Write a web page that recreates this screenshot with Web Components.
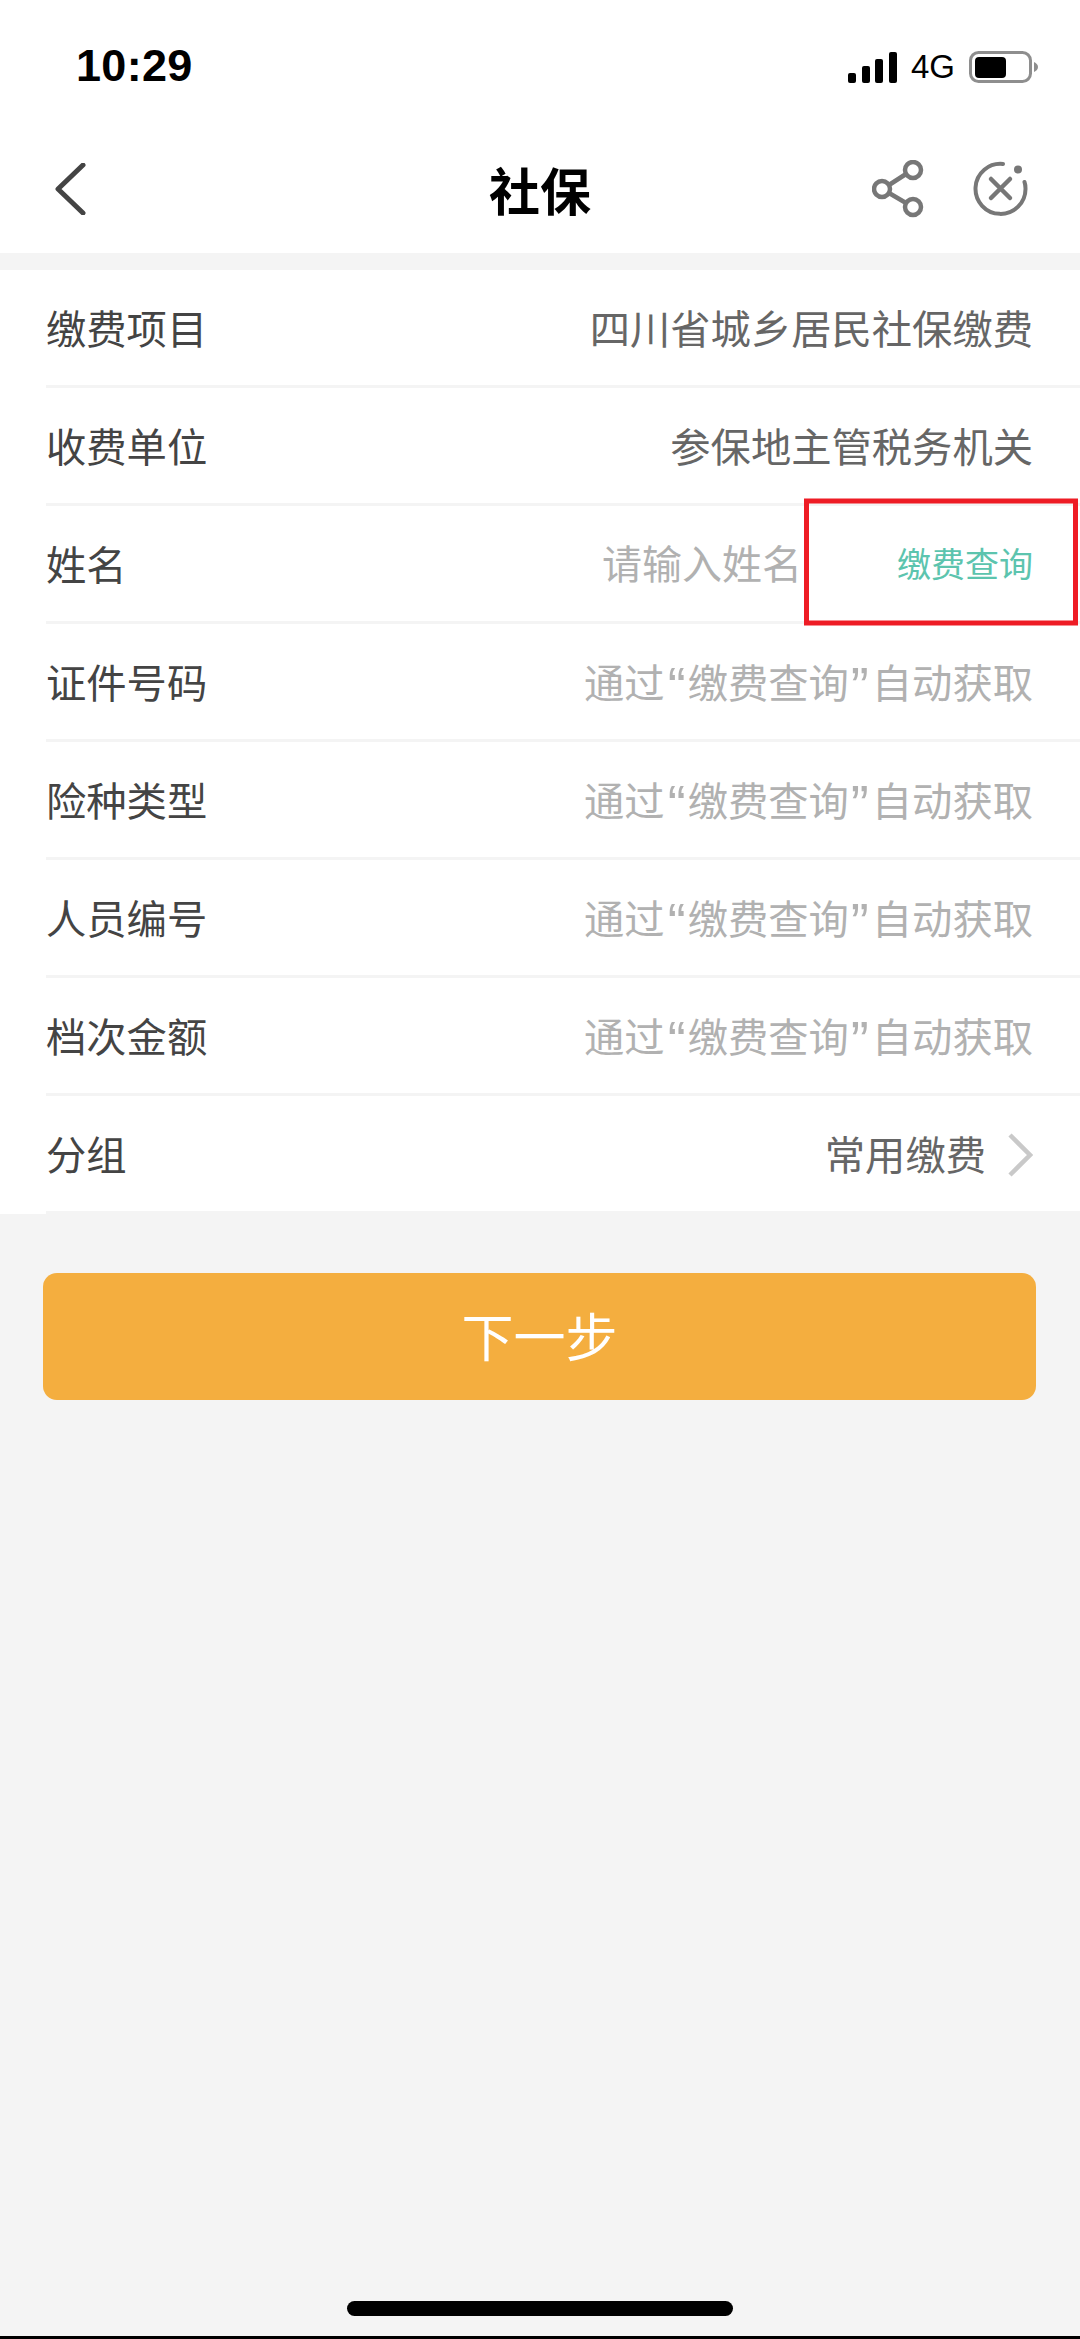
<!DOCTYPE html>
<html lang="zh-CN">
<head>
<meta charset="utf-8">
<title>社保</title>
<style>
html, body { margin: 0; padding: 0; }
body { font-family: "Noto Sans CJK SC", "Noto Sans", sans-serif; background: #f4f4f4; }
social-page { height: 2339px; }
</style>
</head>
<body>
<social-page>
  <status-bar time="10:29"></status-bar>
  <nav-bar title="社保"></nav-bar>
  <form-list>
    <form-row label="缴费项目">四川省城乡居民社保缴费</form-row>
    <form-row label="收费单位">参保地主管税务机关</form-row>
    <form-row label="姓名"><query-field placeholder="请输入姓名" action="缴费查询"></query-field></form-row>
    <form-row label="证件号码" muted><auto-hint></auto-hint></form-row>
    <form-row label="险种类型" muted><auto-hint></auto-hint></form-row>
    <form-row label="人员编号" muted><auto-hint></auto-hint></form-row>
    <form-row label="档次金额" muted><auto-hint></auto-hint></form-row>
    <form-row label="分组" arrow>常用缴费</form-row>
  </form-list>
  <next-button>下一步</next-button>
  <home-bar></home-bar>
</social-page>

<script>
//page shell
class SocialPage extends HTMLElement {
  shadowDom = this.attachShadow({ mode: "open" });
  constructor() {
    super();
    this.shadowDom.innerHTML = `
<style>
:host{ display: flex; flex-direction: column; background: #f4f4f4; overflow: hidden; }
</style>
<slot></slot>`;
  }
}

//status bar
class StatusBar extends HTMLElement {
  shadowDom = this.attachShadow({ mode: "open" });
  connectedCallback() {
    this.shadowDom.innerHTML = `
<style>
:host{ display: flex; align-items: flex-start; justify-content: space-between; height: 130px; background: #fff; padding: 44px 41px 0 76px; box-sizing: border-box; color: #000; font-family: "Liberation Sans", sans-serif; }
.time{ font-size: 45px; line-height: 44px; font-weight: 700; letter-spacing: .3px; }
.right{ display: flex; align-items: center; gap: 14px; margin-top: 6px; }
.net{ font-size: 33px; line-height: 34px; }
svg{ display: block; }
</style>
<div class="time">${this.getAttribute("time")}</div>
<div class="right">
  <svg width="49" height="31" viewBox="0 0 49 31"><rect x="0" y="21" width="8" height="10" rx="2"/><rect x="14" y="14" width="8" height="17" rx="2"/><rect x="27" y="7" width="8" height="24" rx="2"/><rect x="41" y="0" width="8" height="31" rx="2"/></svg>
  <div class="net">4G</div>
  <svg width="70" height="32" viewBox="0 0 70 32"><rect x="1.500" y="1.500" width="60" height="29" rx="8" fill="none" stroke="#8e8e8e" stroke-width="3"/><rect x="6" y="6" width="31" height="21" rx="4"/><path d="M65 11c2.500 1 4 3 4 5s-1.500 4-4 5z" fill="#8e8e8e"/></svg>
</div>`;
  }
}

//top navigation
class NavBar extends HTMLElement {
  shadowDom = this.attachShadow({ mode: "open" });
  connectedCallback() {
    this.shadowDom.innerHTML = `
<style>
:host{ display: grid; grid-template-columns: 1fr auto 1fr; align-items: center; height: 123px; background: #fff; padding: 0 52px 6px 52px; box-sizing: border-box; }
h1{ margin: 0; font-size: 51px; line-height: 60px; font-weight: 700; color: #000; }
.icons{ display: flex; justify-content: flex-end; align-items: center; gap: 49px; }
svg{ display: block; }
</style>
<svg width="38" height="52" viewBox="0 0 38 52" fill="none"><path d="M31 2 6 26l25 24" stroke="#444" stroke-width="5" stroke-linecap="round" stroke-linejoin="round"/></svg>
<h1>${this.getAttribute("title")}</h1>
<div class="icons">
  <svg width="52" height="58" viewBox="0 0 52 58" fill="none" stroke="#777" stroke-width="4.500"><circle cx="41" cy="10" r="8"/><circle cx="10" cy="29" r="8"/><circle cx="41" cy="47" r="8"/><path d="m17 25 17-11M17 33l17 10"/></svg>
  <svg width="55" height="55" viewBox="0 0 55 55" fill="none" stroke="#777" stroke-width="4" stroke-linecap="round"><path d="M30 3A25 25 0 1 0 52.500 27.500c0-2.500-.3-4.500-1-6.500"/><path d="m18 18 19 19M37 18 18 37" stroke-width="4.500"/><circle cx="45" cy="8.500" r="4" fill="#777" stroke="none"/></svg>
</div>`;
  }
}

//list of rows
class FormList extends HTMLElement {
  shadowDom = this.attachShadow({ mode: "open" });
  constructor() {
    super();
    this.shadowDom.innerHTML = `
<style>
:host{ display: block; margin-top: 17px; background: #fff; }
</style>
<slot></slot>`;
  }
}

//one label + value row
class FormRow extends HTMLElement {
  shadowDom = this.attachShadow({ mode: "open" });
  connectedCallback() {
    const arrow = this.hasAttribute("arrow")
      ? `<svg class="arrow" width="26" height="44" viewBox="0 0 26 44" fill="none"><path d="m3 2 20 20L3 42" stroke="#c9c9c9" stroke-width="4.500"/></svg>`
      : "";
    this.shadowDom.innerHTML = `
<style>
:host{ display: block; padding-left: 46px; }
.row{ display: flex; align-items: center; justify-content: space-between; height: 118px; box-sizing: border-box; padding: 0 47px 3px 0; border-bottom: 3px solid #f4f4f4; font-size: 40.300px; }
.label{ color: #444; }
.value{ display: flex; align-items: center; gap: 21px; color: #666; }
:host([muted]) .value{ color: #b1b1b1; }
.arrow{ display: block; margin-top: 5px; }
</style>
<div class="row">
  <div class="label">${this.getAttribute("label")}</div>
  <div class="value"><span><slot></slot></span>${arrow}</div>
</div>`;
  }
}

//hint text, its curly quotes are narrow and sit against the quoted words
class AutoHint extends HTMLElement {
  shadowDom = this.attachShadow({ mode: "open" });
  constructor() {
    super();
    this.shadowDom.innerHTML = `
<style>
:host{ display: inline; }
.open, .close{ font-family: "Liberation Sans", sans-serif; font-size: 54px; line-height: 0; vertical-align: -7px; }
.open{ padding: 0 2px 0 3px; }
.close{ padding: 0 3px 0 2px; }
</style>
通过<span class="open">“</span>缴费查询<span class="close">”</span>自动获取`;
  }
}

//name input with the query action, boxed in red on the screenshot
class QueryField extends HTMLElement {
  shadowDom = this.attachShadow({ mode: "open" });
  connectedCallback() {
    this.shadowDom.innerHTML = `
<style>
:host{ display: flex; align-items: center; position: relative; }
.placeholder{ color: #b1b1b1; font-size: 40px; margin-right: 95px; }
.action{ color: #5cc4ae; font-size: 34px; }
.mark{ position: absolute; right: -45px; top: 50%; transform: translateY(-50%); width: 274px; height: 127px; box-sizing: border-box; border: 5px solid #ee1c25; }
</style>
<span class="placeholder">${this.getAttribute("placeholder")}</span>
<span class="action">${this.getAttribute("action")}</span>
<div class="mark"></div>`;
  }
}

//main button
class NextButton extends HTMLElement {
  shadowDom = this.attachShadow({ mode: "open" });
  constructor() {
    super();
    this.shadowDom.innerHTML = `
<style>
:host{ display: flex; align-items: center; justify-content: center; height: 127px; box-sizing: border-box; padding-bottom: 4px; margin: 59px 44px 0 43px; border-radius: 14px; background: #f4ae3f; color: #fff; font-size: 52px; }
</style>
<slot></slot>`;
  }
}

//home indicator and the black edge under it
class HomeBar extends HTMLElement {
  shadowDom = this.attachShadow({ mode: "open" });
  constructor() {
    super();
    this.shadowDom.innerHTML = `
<style>
:host{ display: flex; flex-direction: column; justify-content: flex-end; align-items: center; flex: 1; }
.pill{ width: 386px; height: 15px; border-radius: 8px; background: #000; margin-bottom: 20px; }
.edge{ align-self: stretch; height: 3px; background: #000; }
</style>
<div class="pill"></div>
<div class="edge"></div>`;
  }
}

customElements.define("social-page", SocialPage);
customElements.define("status-bar", StatusBar);
customElements.define("nav-bar", NavBar);
customElements.define("form-list", FormList);
customElements.define("form-row", FormRow);
customElements.define("auto-hint", AutoHint);
customElements.define("query-field", QueryField);
customElements.define("next-button", NextButton);
customElements.define("home-bar", HomeBar);
</script>
</body>
</html>
